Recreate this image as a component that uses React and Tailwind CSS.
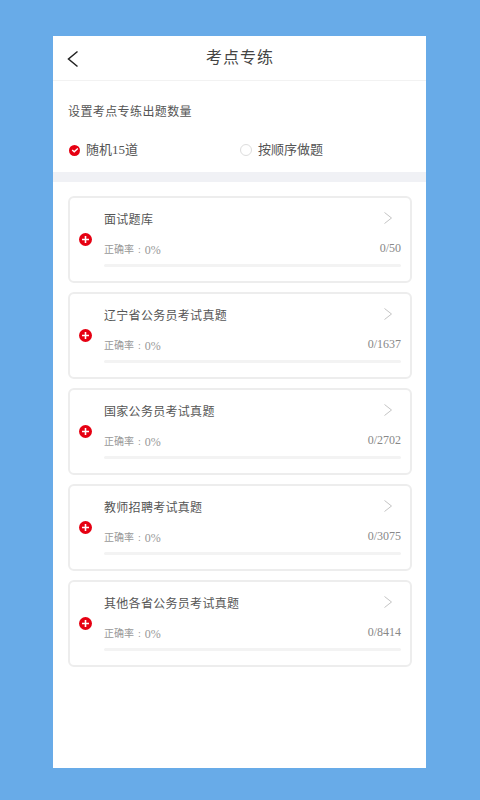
const F = { fontFamily: '"Liberation Serif","Noto Sans CJK SC",serif' };
const items = [
  ["面试题库", "0/50"],
  ["辽宁省公务员考试真题", "0/1637"],
  ["国家公务员考试真题", "0/2702"],
  ["教师招聘考试真题", "0/3075"],
  ["其他各省公务员考试真题", "0/8414"],
];
function Card({ title, count }) {
  return (
    <div className="relative h-[87px] rounded-md border-2 border-[#ededed] bg-white pl-[34px] pr-[9px]">
      <div className="absolute left-[9px] top-[35px] flex h-[13px] w-[13px] items-center justify-center rounded-full bg-[#e60012]">
        <svg width="9" height="9" viewBox="0 0 9 9"><path d="M4.5 1v7M1 4.5h7" stroke="#fff" strokeWidth="1.6" /></svg>
      </div>
      <div className="flex h-[44px] items-center justify-between">
        <span className="-mt-[1px] text-[12px] tracking-[0.3px] text-[#555]">{title}</span>
        <svg className="mr-[8px] -mt-[4px]" width="10" height="14" viewBox="0 0 10 14" fill="none"><path d="M1.5 1.5 8.5 7 1.5 12.5" stroke="#c4c4c4" strokeWidth="1" /></svg>
      </div>
      <div className="flex h-[19px] items-center justify-between">
        <span className="-mt-[4px] flex items-center text-[#999]">
          <span className="text-[10px]">正确率</span>
          <span className="mx-[4px] text-[10px]">:</span>
          <span className="text-[12px]">0%</span>
        </span>
        <span className="-mt-[8px] text-[12px] text-[#888]">{count}</span>
      </div>
      <div className="mt-[3px] h-[3px] rounded-full bg-[#f3f3f3]" />
    </div>
  );
}
export default function App() {
  return (
    <div className="h-[800px] w-[480px] overflow-hidden bg-[#68abe8] px-[53px] pb-[32px] pt-[36px]" style={F}>
      <div className="h-[732px] w-[373px] bg-white">
        <div className="relative flex h-[45px] items-center justify-center border-b border-[#f2f2f2]">
          <svg className="absolute left-[14px] top-[14px]" width="12" height="18" viewBox="0 0 12 18" fill="none"><path d="M10.5 1.5 1.5 9l9 7.5" stroke="#222" strokeWidth="1.5" /></svg>
          <span className="ml-[1px] text-[16px] tracking-[1px] text-[#444]">考点专练</span>
        </div>
        <div className="h-[91px] pl-[15px] pr-[14px] pt-[22px]">
          <div className="text-[12px] leading-[18px] tracking-[0.4px] text-[#555]">设置考点专练出题数量</div>
          <div className="mt-[20px] flex items-center">
            <div className="ml-[1px] flex w-[171px] items-center gap-[6px]">
              <div className="flex h-[11px] w-[11px] items-center justify-center rounded-full bg-[#e60012]">
                <svg width="8" height="8" viewBox="0 0 8 8" fill="none"><path d="M1.2 4 3.2 5.8 6.8 2.4" stroke="#fff" strokeWidth="1.4" /></svg>
              </div>
              <span className="text-[13px] leading-[18px] text-[#555]">随机15道</span>
            </div>
            <div className="flex items-center gap-[6px]">
              <div className="h-[12px] w-[12px] rounded-full border border-[#ddd]" />
              <span className="text-[13px] leading-[18px] text-[#555]">按顺序做题</span>
            </div>
          </div>
        </div>
        <div className="h-[10px] bg-[#f0f1f5]" />
        <div className="flex flex-col gap-[9px] pl-[15px] pr-[14px] pt-[14px]">
          {items.map(([t, c]) => <Card key={t} title={t} count={c} />)}
        </div>
      </div>
    </div>
  );
}
